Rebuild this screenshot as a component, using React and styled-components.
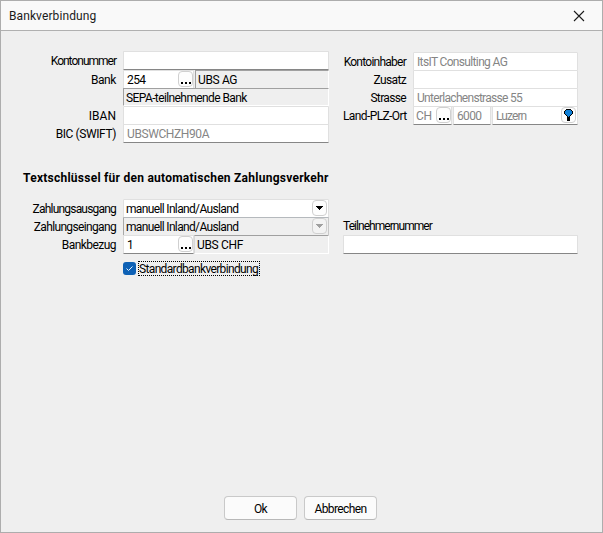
import styled, { createGlobalStyle, css } from "styled-components";

const GlobalStyle = createGlobalStyle`
  * {
    box-sizing: border-box;
  }

  body {
    margin: 0;
    background: #efefef;
  }
`;

const Dialog = styled.main`
  display: flex;
  flex-direction: column;
  width: 603px;
  height: 533px;
  border: 1px solid #adadad;
  background: #efefef;
  color: #000;
  font-family: Roboto, sans-serif;
  font-size: 12px;
  line-height: 18px;
  white-space: nowrap;
  overflow: hidden;
`;

const TitleBar = styled.header`
  display: flex;
  align-items: center;
  justify-content: space-between;
  height: 30px;
  flex: none;
  padding: 0 17px 0 8px;
  border-bottom: 1px solid #b0b0b0;
  background: #f9f9f9;
  color: #1b1b1b;
`;

const Text = styled.span`
  letter-spacing: ${(p) => p.$spacing ?? -0.65}px;
`;

const CloseButton = styled.button`
  display: flex;
  padding: 0;
  border: 0;
  background: none;
`;

const Columns = styled.section`
  display: grid;
  grid-template-columns: 206px 235px;
  column-gap: 14px;
  padding-left: 122px;
  height: ${(p) => p.$height}px;
  margin-top: ${(p) => p.$top}px;
  align-items: start;
`;

const Panel = styled.div`
  display: flex;
  flex-direction: column;
  padding-top: ${(p) => p.$top || 0}px;
`;

const Row = styled.div`
  display: grid;
  grid-template-columns: ${(p) => p.$label || 0}px 1fr;
  margin-left: ${(p) => p.$shift || 0}px;
  height: ${(p) => p.$height || 18}px;
`;

const Label = styled.label`
  padding-right: 7px;
  padding-top: 1px;
  text-align: right;
`;

const Group = styled.div`
  display: flex;
  gap: ${(p) => p.$gap || 0}px;
  min-width: 0;
`;

const Field = styled.div`
  display: flex;
  justify-content: space-between;
  flex: ${(p) => (p.$width ? `0 0 ${p.$width}px` : "1")};
  height: ${(p) => p.$height || 19}px;
  padding-left: ${(p) => p.$pad || 3}px;
  border: 1px solid #e0e0e0;
  border-bottom-color: ${(p) => (p.$strong ? "#868686" : "#e0e0e0")};
  border-radius: 1px;
  background: #fff;
  color: ${(p) => (p.$muted ? "#858585" : "#000")};

  ${(p) =>
    p.$sunken &&
    css`
      border-color: #a0a0a0 #fff #fff ${p.$soft ? "#d8d8d8" : "#a0a0a0"};
      border-radius: 0;
      background: #efefef;
      padding-left: ${p.$pad || 2}px;
    `}

  ${(p) =>
    p.$disabled &&
    css`
      border-color: #b5b9bd #c8c8c8 #b0b0b0 #a8a8a8;
      background: #efefef;
    `}
`;

const MiniButton = styled.button`
  display: flex;
  align-items: center;
  justify-content: center;
  flex: none;
  width: 15px;
  height: 16px;
  margin: 0 ${(p) => p.$inset || 0}px 0 0;
  padding: 0;
  border: 1px solid #d0d0d0;
  border-radius: 4px;
  background: ${(p) => (p.disabled ? "#f3f3f3" : "#fdfdfd")};
`;

const Heading = styled.h2`
  margin: 25px 0 0 22px;
  height: 21px;
  font-size: 12px;
  line-height: 20px;
  font-weight: 700;
`;

const CheckRow = styled.div`
  display: flex;
  align-items: center;
  gap: 2px;
  height: 15px;
  margin: 7px 0 0 122px;
`;

const Check = styled.span`
  display: flex;
  align-items: center;
  justify-content: center;
  width: 13px;
  height: 13px;
  border-radius: 3px;
  background: #0e61b5;
`;

const Focused = styled.span`
  width: 122px;
  height: 15px;
  border: 1px dotted #000;
  line-height: 14px;
`;

const Footer = styled.footer`
  display: flex;
  gap: 7px;
  margin-top: auto;
  padding: 0 0 12px 223px;
`;

const PushButton = styled.button`
  width: 73px;
  height: 24px;
  padding: 1px 0 0;
  border: 1px solid #c9c9c9;
  border-bottom-color: #b8b8b8;
  border-radius: 4px;
  background: #fbfbfb;
  color: #000;
  font: inherit;
  line-height: 20px;
`;

const Dots = () => (
  <MiniButton>
    <svg width="13" height="14" shapeRendering="crispEdges">
      <path d="M2 10h2v2H2zM6 10h2v2H6zM10 10h2v2H10z" />
    </svg>
  </MiniButton>
);

const Arrow = ({ disabled }) => (
  <MiniButton disabled={disabled} $inset={1}>
    <svg width="9" height="6" viewBox="0 0 9 6" shapeRendering="crispEdges">
      <path d="M1 1h7v1h-1v1h-1v1h-1v1h-1v-1h-1v-1h-1v-1h-1z" fill={disabled ? "#a0a0a0" : "#000"} />
    </svg>
  </MiniButton>
);

const Pin = () => (
  <MiniButton $inset={1}>
    <svg width="9" height="12" viewBox="0 0 9 12" shapeRendering="crispEdges">
      <path d="M2 0h5v1h1v1h1v3h-1v1h-1v1h-1v5h-3v-5h-1v-1h-1v-1h-1v-3h1v-1h1z" />
      <path d="M2 1h5v1h1v3h-1v1h-1v1h-1v1h-1v-1h-1v-1h-1v-1h-1v-3h1z" fill="#0d7fd8" />
    </svg>
  </MiniButton>
);

const App = () => {
  return (
    <>
      <GlobalStyle />
      <Dialog>
        <TitleBar>
          <Text $spacing={0.1}>Bankverbindung</Text>
          <CloseButton aria-label="Schliessen">
            <svg width="12" height="12" viewBox="0 0 12 12" stroke="#1b1b1b" strokeWidth="1.1">
              <path d="M1 1l10 10M11 1L1 11" />
            </svg>
          </CloseButton>
        </TitleBar>

        <Columns $height={92} $top={20}>
          <Panel>
            <Row $label={110} $shift={-110} $height={19}>
              <Label><Text $spacing={-1}>Kontonummer</Text></Label>
              <Field $strong />
            </Row>
            <Row $label={110} $shift={-110}>
              <Label><Text $spacing={-0.4}>Bank</Text></Label>
              <Group $gap={1}>
                <Field $width={71} $strong><Text $spacing={-0.6}>254</Text><Dots /></Field>
                <Field $sunken><Text $spacing={-0.35}>UBS AG</Text></Field>
              </Group>
            </Row>
            <Row $label={110} $shift={-110}>
              <span />
              <Field $sunken $height={18}><Text $spacing={-0.6}>SEPA-teilnehmende Bank</Text></Field>
            </Row>
            <Row $label={110} $shift={-110}>
              <Label><Text $spacing={0}>IBAN</Text></Label>
              <Field />
            </Row>
            <Row $label={110} $shift={-110}>
              <Label><Text $spacing={-0.4}>BIC (SWIFT)</Text></Label>
              <Field $strong $muted><Text $spacing={-0.4}>UBSWCHZH90A</Text></Field>
            </Row>
          </Panel>
          <Panel $top={1}>
            <Row $label={70}>
              <Label><Text $spacing={-0.75}>Kontoinhaber</Text></Label>
              <Field $muted><Text>ItsIT Consulting AG</Text></Field>
            </Row>
            <Row $label={70}>
              <Label><Text>Zusatz</Text></Label>
              <Field />
            </Row>
            <Row $label={70}>
              <Label><Text>Strasse</Text></Label>
              <Field $muted><Text $spacing={-0.7}>Unterlachenstrasse 55</Text></Field>
            </Row>
            <Row $label={70}>
              <Label><Text $spacing={-0.6}>Land-PLZ-Ort</Text></Label>
              <Group $gap={1}>
                <Field $width={39} $strong $muted $pad={2}><Text $spacing={-0.4}>CH</Text><Dots /></Field>
                <Field $width={38} $strong $muted><Text>6000</Text></Field>
                <Field $strong $muted><Text $spacing={-0.9}>Luzern</Text><Pin /></Field>
              </Group>
            </Row>
          </Panel>
        </Columns>

        <Heading><Text $spacing={0.25}>Textschlüssel für den automatischen Zahlungsverkehr</Text></Heading>

        <Columns $height={55} $top={10}>
          <Panel>
            <Row $label={110} $shift={-110}>
              <Label><Text $spacing={-0.8}>Zahlungsausgang</Text></Label>
              <Field $pad={2}><Text>manuell Inland/Ausland</Text><Arrow /></Field>
            </Row>
            <Row $label={110} $shift={-110}>
              <Label><Text>Zahlungseingang</Text></Label>
              <Field $disabled $pad={2}><Text>manuell Inland/Ausland</Text><Arrow disabled /></Field>
            </Row>
            <Row $label={110} $shift={-110}>
              <Label><Text $spacing={-0.55}>Bankbezug</Text></Label>
              <Group>
                <Field $width={71} $strong><Text>1</Text><Dots /></Field>
                <Field $sunken $soft><Text $spacing={-0.35}>UBS CHF</Text></Field>
              </Group>
            </Row>
          </Panel>
          <Panel $top={18}>
            <label><Text $spacing={-0.95}>Teilnehmernummer</Text></label>
            <Group>
              <Field $strong />
            </Group>
          </Panel>
        </Columns>

        <CheckRow>
          <Check>
            <svg width="9" height="9" viewBox="0 0 9 9" fill="none" stroke="#e5f2ff">
              <path d="M1.500 4.500l2 2L7.500 2.500" />
            </svg>
          </Check>
          <Focused><Text>Standardbankverbindung</Text></Focused>
        </CheckRow>

        <Footer>
          <PushButton><Text>Ok</Text></PushButton>
          <PushButton><Text $spacing={-0.6}>Abbrechen</Text></PushButton>
        </Footer>
      </Dialog>
    </>
  );
};

export default App;
